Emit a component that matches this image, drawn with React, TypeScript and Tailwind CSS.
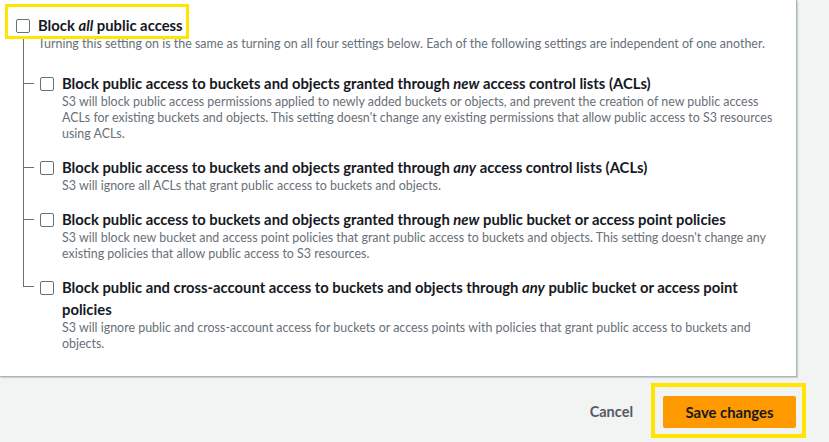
import React from "react";

const font = { fontFamily: "Lato, 'Liberation Sans', sans-serif" };

function Box() {
  return <div className="w-[14px] h-[14px] shrink-0 border border-[#687078] rounded-[2px] bg-white" />;
}

function Title({ children }: { children: React.ReactNode }) {
  return <div className="text-[14.8px] leading-[22px] font-bold text-[#16191f] whitespace-nowrap">{children}</div>;
}

function Desc({ lines }: { lines: string[] }) {
  return (
    <div className="text-[12.45px] leading-[16px] text-[#687078] whitespace-nowrap">
      {lines.map((l, i) => (
        <div key={i}>{l}</div>
      ))}
    </div>
  );
}

function Item({
  title,
  lines,
  first,
  last,
}: {
  title: React.ReactNode;
  lines: string[];
  first?: boolean;
  last?: boolean;
}) {
  return (
    <div className={`flex ${first ? "pt-[20px]" : last ? "" : "pt-[14px]"}`}>
      {last ? (
        <div className="w-[11px] h-[11px] shrink-0 border-l border-b border-[#687078]" />
      ) : (
        <div className="w-[10px] h-px mt-[11px] shrink-0 bg-[#687078]" />
      )}
      <div className="mt-[5px] ml-[6px]">
        <Box />
      </div>
      <div className="ml-[8px]">
        <Title>{title}</Title>
        <Desc lines={lines} />
      </div>
    </div>
  );
}

export default function App() {
  return (
    <div className="w-[829px] h-[442px] bg-[#f2f3f3] overflow-hidden" style={font}>
      <div className="relative w-[797px] h-[377px] bg-white border-r border-b border-[#aab7b8] shadow-[1px_1px_1px_rgba(0,28,36,0.15)] pl-[16px] pt-[14px]">
        <div className="absolute left-[5px] top-[4px] w-[184px] h-[35px] border-[3px] border-[#ffe500]" />
        <div className="flex">
          <div className="mt-[5px]">
            <Box />
          </div>
          <div className="ml-[8px]">
            <Title>
              Block <i>all</i> public access
            </Title>
          </div>
        </div>
        <div className="ml-[7px] border-l border-[#687078] pb-[14px]">
          <div className="pl-[14px]">
            <Desc lines={["Turning this setting on is the same as turning on all four settings below. Each of the following settings are independent of one another."]} />
          </div>
          <Item
            first
            title={
              <>
                Block public access to buckets and objects granted through <i>new</i> access control lists (ACLs)
              </>
            }
            lines={[
              "S3 will block public access permissions applied to newly added buckets or objects, and prevent the creation of new public access",
              "ACLs for existing buckets and objects. This setting doesn't change any existing permissions that allow public access to S3 resources",
              "using ACLs.",
            ]}
          />
          <Item
            title={
              <>
                Block public access to buckets and objects granted through <i>any</i> access control lists (ACLs)
              </>
            }
            lines={["S3 will ignore all ACLs that grant public access to buckets and objects."]}
          />
          <Item
            title={
              <>
                Block public access to buckets and objects granted through <i>new</i> public bucket or access point policies
              </>
            }
            lines={[
              "S3 will block new bucket and access point policies that grant public access to buckets and objects. This setting doesn't change any",
              "existing policies that allow public access to S3 resources.",
            ]}
          />
        </div>
        <div className="ml-[7px]">
          <Item
            last
            title={
              <>
                Block public and cross-account access to buckets and objects through <i>any</i> public bucket or access point
                <br />
                policies
              </>
            }
            lines={[
              "S3 will ignore public and cross-account access for buckets or access points with policies that grant public access to buckets and",
              "objects.",
            ]}
          />
        </div>
      </div>
      <div className="flex justify-end items-start pt-[6px] pr-[23px]">
        <div className="h-[49px] flex items-center mr-[18px] pt-[9px]">
          <span className="text-[14.5px] font-bold text-[#545b64]">Cancel</span>
        </div>
        <div className="border-4 border-[#ffe500] pl-[8px] pr-[6px] pt-[9px] pb-[6px]">
          <div className="w-[133px] h-[32px] rounded-[2px] bg-[#ff9900] flex items-center justify-center text-[14.8px] font-bold text-[#16191f]">
            Save changes
          </div>
        </div>
      </div>
    </div>
  );
}
